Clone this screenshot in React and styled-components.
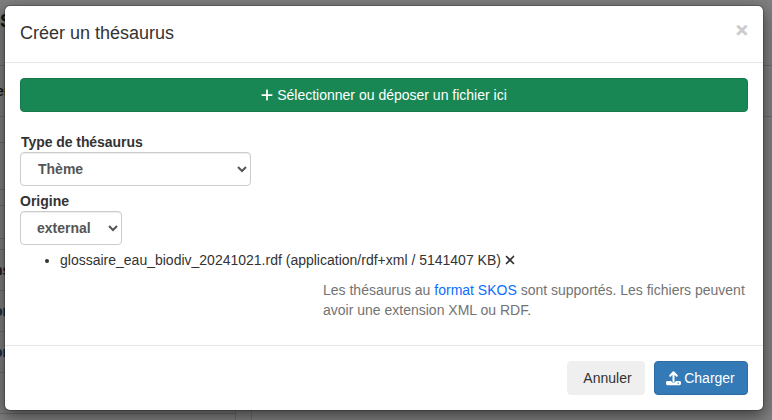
import React from 'react';
import styled, { createGlobalStyle } from 'styled-components';
import { FaPlus, FaXmark } from 'react-icons/fa6';

const GlobalStyle = createGlobalStyle`
  *, *::before, *::after { box-sizing: border-box; }
  body {
    margin: 0;
    overflow: hidden;
    background: #7f7f7f;
    color: #333;
    font: 14px/20px "Liberation Sans", Arial, sans-serif;
  }
`;

const Screen = styled.div`
  position: relative;
  width: 772px;
  height: 420px;
  overflow: hidden;
`;

const Page = styled.div`
  display: grid;
  grid-template-columns: 236px 15px 1fr;
  grid-template-rows: 66px 51px 297px 1fr;
  height: 420px;
`;

const Band = styled.div`
  grid-column: 1 / -1;
  border-bottom: 1px solid #6c6c6c;
  font-weight: bold;
  color: #151515;
  line-height: 26px;
  padding-top: ${(p) => p.$top}px;
  font-size: ${(p) => p.$size}px;
  text-indent: ${(p) => p.$shift}px;
`;

const Sidebar = styled.div`
  display: flex;
  flex-direction: column;
  border-right: 1px solid #6c6c6c;
  grid-row: 3 / 4;
`;

const SideRow = styled.div`
  flex: none;
  display: flex;
  align-items: center;
  height: ${(p) => p.$height}px;
  border-bottom: 1px solid #6c6c6c;
  color: ${(p) => p.$color || '#151515'};
  font-weight: bold;
  text-indent: -6px;
`;

const SideEnd = styled.div`
  grid-column: 1;
  grid-row: 4;
  border-right: 1px solid #6c6c6c;
`;

const Content = styled.div`
  grid-column: 3;
  grid-row: 3 / 5;
  border-left: 1px solid #6c6c6c;
`;

const Modal = styled.section`
  position: absolute;
  left: 4px;
  top: 5px;
  width: 760px;
  height: 406px;
  display: flex;
  flex-direction: column;
  background: #fff;
  background-clip: padding-box;
  border: 1px solid rgba(0, 0, 0, 0.2);
  border-radius: 6px;
  box-shadow: 0 5px 15px rgba(0, 0, 0, 0.5);
`;

const Header = styled.header`
  display: flex;
  justify-content: space-between;
  align-items: flex-start;
  height: 57px;
  padding: 15px;
  border-bottom: 1px solid #e5e5e5;
`;

const Title = styled.h4`
  margin: 0;
  font-size: 18px;
  font-weight: normal;
  line-height: 25px;
`;

const Close = styled.button`
  margin: -2px 0 0;
  padding: 0;
  border: 0;
  background: transparent;
  color: #000;
  opacity: 0.2;
  -webkit-text-stroke: 0.5px #000;
  font: bold 21px/21px "Liberation Sans", Arial, sans-serif;
`;

const Body = styled.div`
  height: 282px;
  padding: 15px;
`;

const Button = styled.button`
  display: flex;
  align-items: center;
  justify-content: center;
  gap: 3px;
  width: ${(p) => p.$width};
  height: 34px;
  padding: 0 12px 0 11px;
  border: 1px solid ${(p) => p.$border};
  border-radius: 4px;
  background: ${(p) => p.$bg};
  color: ${(p) => p.$color || '#fff'};
  font: 14px/20px "Liberation Sans", Arial, sans-serif;
`;

const DropButton = styled(Button)`
  margin-bottom: 20px;
`;

const CancelButton = styled(Button)`
  padding: 0 12px 0 15px;
`;

const Field = styled.div`
  height: 59px;
`;

const Label = styled.label`
  display: block;
  height: 20px;
  font-weight: bold;
  letter-spacing: ${(p) => (p.$indent ? '-0.06px' : 'normal')};
  padding-left: ${(p) => p.$indent || 0}px;
`;

const Select = styled.select`
  display: block;
  width: ${(p) => p.$width}px;
  height: 34px;
  padding: 6px 1px 6px ${(p) => p.$inset}px;
  border: 1px solid #ccc;
  border-right-width: 1px;
  border-radius: 4px;
  background-color: #fff;
  box-shadow: inset 0 1px 1px rgba(0, 0, 0, 0.075);
  color: #555;
  font: bold 14px/20px "Liberation Sans", Arial, sans-serif;
`;

const Files = styled.ul`
  margin: 0 0 10px;
  padding-left: 40px;
`;

const RemoveIcon = styled(FaXmark)`
  margin-left: -2px;
  vertical-align: -2px;
`;

const Help = styled.p`
  margin: 0 0 0 303px;
  color: #737373;
`;

const Link = styled.a`
  color: #0d6efd;
  text-decoration: none;
`;

const Footer = styled.footer`
  display: flex;
  justify-content: flex-end;
  gap: 9px;
  padding: 15px;
  border-top: 1px solid #e5e5e5;
`;

const UploadGlyph = styled.svg`
  flex: none;
  width: 15px;
  height: 15px;
`;

function UploadIcon() {
  return (
    <UploadGlyph viewBox="0 0 15 15" aria-hidden="true">
      <path
        d="M4.2 4.7 7.5 1.3l3.3 3.4M7.5 2v8.5"
        fill="none"
        stroke="#fff"
        strokeWidth="2"
        strokeLinecap="round"
        strokeLinejoin="round"
      />
      <path
        d="M1.6 10h3.6a2.4 2.4 0 0 0 4.6 0h3.6A1.5 1.5 0 0 1 15 11.5v1.3a1.5 1.5 0 0 1-1.6 1.5H1.6A1.5 1.5 0 0 1 0 12.8v-1.3A1.5 1.5 0 0 1 1.6 10Z"
        fill="#fff"
      />
      <circle cx="12.2" cy="12.2" r="0.7" fill="#337ab7" />
    </UploadGlyph>
  );
}

const sideRows = [
  { height: 26 },
  { height: 47 },
  { height: 16 },
  { height: 33 },
  { height: 11 },
  { height: 41, text: 'ns', color: '#2b1a20' },
  { height: 41, text: 'on', color: '#162c40' },
  { height: 41, text: 'on', color: '#162c40' },
  { height: 41 },
];

export default function App() {
  return (
    <Screen>
      <GlobalStyle />
      <Page aria-hidden="true">
        <Band $top={8} $size={18} $shift={0}>S</Band>
        <Band $top={12} $size={14} $shift={-4}>er</Band>
        <Sidebar>
          {sideRows.map((row, i) => (
            <SideRow key={i} $height={row.height} $color={row.color}>{row.text}</SideRow>
          ))}
        </Sidebar>
        <SideEnd />
        <Content />
      </Page>
      <Modal role="dialog" aria-label="Créer un thésaurus">
        <Header>
          <Title>Créer un thésaurus</Title>
          <Close aria-label="Fermer">×</Close>
        </Header>
        <Body>
          <DropButton $width="100%" $bg="#198754" $border="#177a4c">
            <FaPlus size={14} />
            Sélectionner ou déposer un fichier ici
          </DropButton>
          <Field>
            <Label $indent={1}>Type de thésaurus</Label>
            <Select $width={231} $inset={13}><option>Thème</option></Select>
          </Field>
          <Field>
            <Label>Origine</Label>
            <Select $width={102} $inset={12}><option>external</option></Select>
          </Field>
          <Files>
            <li>glossaire_eau_biodiv_20241021.rdf (application/rdf+xml / 5141407 KB) <RemoveIcon size={14} /></li>
          </Files>
          <Help>
            Les thésaurus au <Link href="#">format SKOS</Link> sont supportés. Les fichiers peuvent avoir une extension XML ou RDF.
          </Help>
        </Body>
        <Footer>
          <CancelButton $width="78px" $bg="#efefef" $border="#efefef" $color="#333">Annuler</CancelButton>
          <Button $width="94px" $bg="#337ab7" $border="#2e6da4">
            <UploadIcon />
            Charger
          </Button>
        </Footer>
      </Modal>
    </Screen>
  );
}
